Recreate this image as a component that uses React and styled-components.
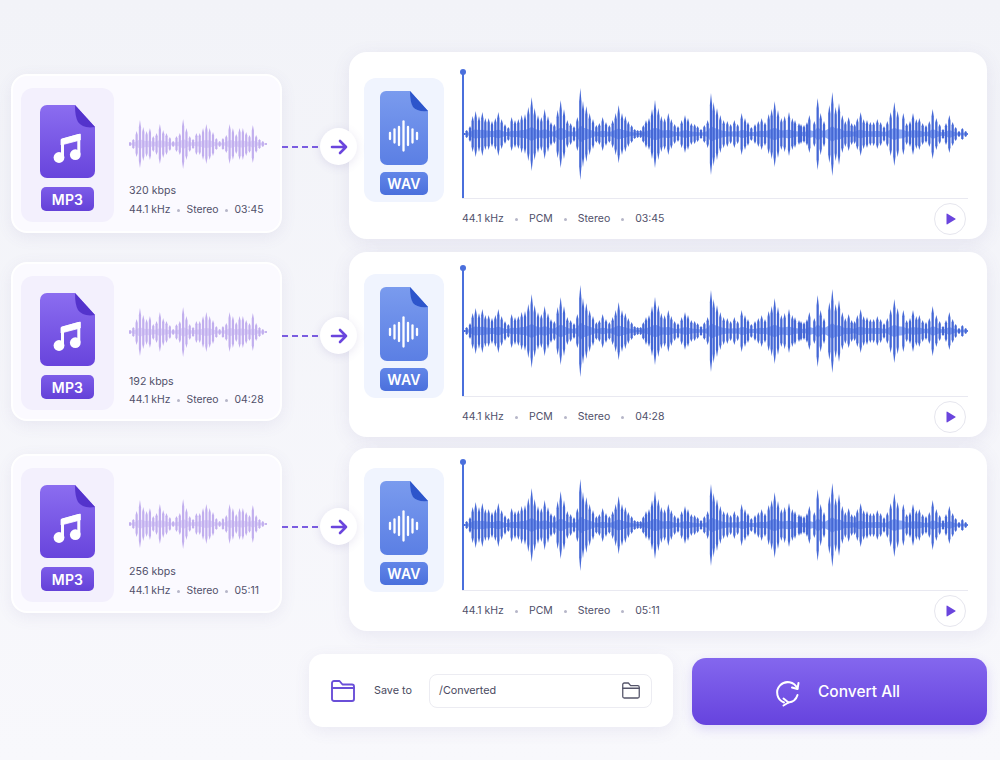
import React from 'react'
import styled, { createGlobalStyle } from 'styled-components'

const GlobalStyle = createGlobalStyle`
  html, body { margin: 0; padding: 0; }
  body {
    width: 1000px;
    height: 760px;
    overflow: hidden;
    font-family: Inter, "Liberation Sans", sans-serif;
    background: linear-gradient(180deg, #f2f3f8 0%, #f8f8fc 100%);
  }
`

// [x, half height] of the bars, measured in three stretches of the reference
const stretch = (start, bars) => bars.map(([x, amp]) => [start + x / 3 - 462, amp])

const LARGE_WAVE = [
  ...stretch(460, [
    [12, 1], [20, 4], [30, 8], [38, 18], [47, 23], [57, 18], [67, 22], [76, 16], [86, 16], [96, 13], [106, 16], [115, 22], [125, 15], [135, 10], [145, 7],
    [155, 17], [165, 14], [175, 15], [185, 19], [195, 20], [205, 27], [215, 37], [224, 26], [234, 19], [244, 17], [254, 25], [264, 18], [273, 12], [283, 10],
    [293, 24], [302, 34], [312, 25], [322, 14], [332, 11], [342, 8], [352, 17], [361, 46], [369, 33], [379, 28], [389, 21], [399, 15], [409, 9], [418, 11],
    [428, 17], [438, 12], [448, 9], [458, 14], [467, 21], [476, 29], [486, 21], [496, 18], [505, 13], [515, 9],
  ]),
  ...stretch(630, [
    [14, 5], [23, 4], [32, 4], [40, 9], [48, 14], [57, 16], [66, 25], [75, 34], [85, 26], [94, 18], [104, 16], [115, 21], [124, 15], [134, 10], [144, 8],
    [155, 14], [165, 19], [174, 16], [184, 11], [194, 10], [203, 8], [213, 5], [223, 9], [233, 14], [243, 41], [251, 32], [261, 26], [271, 19], [281, 14],
    [292, 13], [302, 10], [313, 14], [323, 10], [335, 21], [345, 16], [354, 12], [364, 7], [375, 10], [385, 13], [395, 16], [405, 12], [416, 20], [425, 25],
    [434, 33], [444, 24], [454, 16], [464, 18], [477, 22], [487, 16], [495, 14], [507, 11],
  ]),
  ...stretch(800, [
    [3, 10], [12, 9], [21, 12], [28, 19], [43, 13], [53, 36], [62, 21], [72, 13], [88, 29], [97, 42], [107, 27], [117, 31], [127, 19], [136, 13], [146, 17],
    [155, 11], [164, 10], [172, 16], [182, 22], [191, 15], [201, 14], [211, 12], [221, 12], [232, 15], [242, 12], [252, 8], [262, 13], [272, 22], [283, 32],
    [293, 23], [310, 21], [320, 11], [330, 13], [339, 21], [349, 15], [358, 16], [368, 11], [378, 9], [388, 13], [398, 25], [409, 16], [419, 10], [429, 5],
    [438, 11], [448, 19], [458, 12], [467, 7], [477, 3], [487, 6], [497, 3], [505, 1],
  ]),
]

const SMALL_WAVE = [
  2, 5, 13, 24, 17, 13, 16, 8, 11, 20, 14, 11, 7, 3, 8, 11, 25, 16, 8, 5, 11, 11, 16, 20, 16, 12, 6, 3, 6, 9, 20, 16, 10, 16, 16, 12, 9, 19, 9, 5, 3, 1,
].map((amp, i) => [1 + i * 3.32, amp])

const ROWS = [
  { kbps: '320 kbps', time: '03:45', top: 17, height: 187, offset: 22, gap: 13, arrow: 94, kbpsTop: 10, metaTop: 5 },
  { kbps: '192 kbps', time: '04:28', top: 13, height: 185, offset: 10, gap: 11, arrow: 83, kbpsTop: 13, metaTop: 4 },
  { kbps: '256 kbps', time: '05:11', top: 11, height: 183, offset: 6, gap: 23, arrow: 78, kbpsTop: 11, metaTop: 5 },
]

const Page = styled.div`
  padding: 52px 13px 0 11px;
  display: flex;
  flex-direction: column;
`

const Row = styled.div`
  display: flex;
  align-items: flex-start;
  height: ${(p) => p.$height}px;
  margin-bottom: ${(p) => p.$gap}px;
`

const SourceCard = styled.div`
  box-sizing: border-box;
  width: 271px;
  height: 159px;
  margin-top: ${(p) => p.$offset}px;
  padding: 12px 8px;
  display: flex;
  gap: 15px;
  background: #fbfaff;
  border: 2px solid #fff;
  border-radius: 16px;
  box-shadow: 0 4px 16px rgba(96, 88, 160, 0.09);
`

const SourcePanel = styled.div`
  width: 93px;
  height: 134px;
  flex: none;
  box-sizing: border-box;
  padding-top: 17px;
  border-radius: 12px;
  background: #f3f0fd;
  display: flex;
  flex-direction: column;
  align-items: center;
`

const Badge = styled.div`
  display: flex;
  align-items: center;
  justify-content: center;
  font-weight: 600;
  font-size: 14px;
  letter-spacing: 0.2px;
  color: #fff;
  border-radius: 5px;
  width: ${(p) => (p.$kind === 'wav' ? 48 : 53)}px;
  height: ${(p) => (p.$kind === 'wav' ? 23 : 24)}px;
  margin-top: ${(p) => (p.$kind === 'wav' ? 7 : 9)}px;
  background: ${(p) =>
    p.$kind === 'wav'
      ? 'linear-gradient(180deg, #6286e8, #4b70dc)'
      : 'linear-gradient(180deg, #7c5ce8, #6441d8)'};
`

const SourceInfo = styled.div`
  flex: 1;
  display: flex;
  flex-direction: column;
  font-size: 10.6px;
  color: #50506a;
`

const SmallWaveBox = styled.div`
  height: 60px;
  margin-top: 26px;
  display: flex;
`

const Kbps = styled.div`
  margin-top: ${(p) => p.$top}px;
  line-height: 14px;
`

const MetaLine = styled.div`
  display: flex;
  align-items: center;
  gap: ${(p) => p.$gap}px;
  font-size: ${(p) => p.$size}px;
  line-height: 14px;
  white-space: nowrap;
  color: #50506a;
  margin-top: ${(p) => p.$top || 0}px;
`

const Dot = styled.span`
  width: 3px;
  height: 3px;
  border-radius: 50%;
  background: #b6b6c8;
`

const Connector = styled.div`
  position: relative;
  width: 67px;
  height: 2px;
  flex: none;
  margin-top: ${(p) => p.$top}px;
  background: repeating-linear-gradient(90deg, #7a5ce0 0 6px, transparent 6px 10px);
  z-index: 2;
`

const ArrowDisc = styled.div`
  position: absolute;
  left: 38px;
  top: -18px;
  width: 37px;
  height: 37px;
  border-radius: 50%;
  background: #fff;
  box-shadow: 0 2px 10px rgba(96, 88, 160, 0.14);
  display: flex;
  align-items: center;
  justify-content: center;
`

const ResultCard = styled.div`
  box-sizing: border-box;
  width: 638px;
  height: 100%;
  padding: ${(p) => p.$top}px 19px 0 15px;
  display: flex;
  gap: 18px;
  background: #fff;
  border-radius: 18px;
  box-shadow: 0 4px 18px rgba(96, 88, 160, 0.1);
`

const ResultPanel = styled.div`
  width: 80px;
  height: 124px;
  flex: none;
  margin-top: 9px;
  box-sizing: border-box;
  padding-top: 13px;
  border-radius: 12px;
  background: #f0f4fe;
  display: flex;
  flex-direction: column;
  align-items: center;
`

const ResultBody = styled.div`
  flex: 1;
  display: flex;
  flex-direction: column;
  min-width: 0;
`

const WaveArea = styled.div`
  position: relative;
  flex: 1;
  display: flex;
  align-items: center;
  border-bottom: 1px solid #e9e9f1;
`

const Playhead = styled.div`
  position: absolute;
  left: 0;
  top: 3px;
  bottom: 0;
  width: 2px;
  background: #4a6fdc;

  &::before {
    content: '';
    position: absolute;
    left: -2px;
    top: -3px;
    width: 6px;
    height: 6px;
    border-radius: 50%;
    background: #4a6fdc;
  }
`

const MetaRow = styled.div`
  height: 40px;
  flex: none;
  display: flex;
  align-items: center;
  justify-content: space-between;
`

const PlayButton = styled.div`
  width: 32px;
  height: 32px;
  margin-right: 2px;
  box-sizing: border-box;
  border: 1px solid #e6e6ee;
  border-radius: 50%;
  background: #fff;
  display: flex;
  align-items: center;
  justify-content: center;
`

const Footer = styled.div`
  display: flex;
  align-items: center;
  justify-content: flex-end;
  gap: 19px;
`

const SaveBox = styled.div`
  box-sizing: border-box;
  width: 364px;
  height: 73px;
  padding: 0 21px 0 22px;
  display: flex;
  align-items: center;
  background: #fff;
  border-radius: 14px;
  box-shadow: 0 4px 16px rgba(96, 88, 160, 0.09);
`

const SaveLabel = styled.span`
  width: 38px;
  flex: none;
  white-space: nowrap;
  font-size: 10.8px;
  color: #4a4a60;
  margin: 0 17px 0 19px;
`

const PathField = styled.div`
  flex: 1;
  height: 34px;
  box-sizing: border-box;
  padding: 0 11px 0 9px;
  display: flex;
  align-items: center;
  justify-content: space-between;
  border: 1px solid #ececf2;
  border-radius: 8px;
  font-size: 10.8px;
  color: #4a4a60;
`

const ConvertButton = styled.div`
  box-sizing: border-box;
  width: 295px;
  height: 67px;
  margin-top: 2px;
  padding-right: 6px;
  display: flex;
  align-items: center;
  justify-content: center;
  gap: 17px;
  color: #fff;
  font-size: 15.5px;
  font-weight: 500;
  border-radius: 14px;
  background: linear-gradient(180deg, #8467ee 0%, #6643de 100%);
  box-shadow: 0 4px 12px rgba(100, 70, 220, 0.18);
`

// tapered bars, thick at the axis and thin at the tips, with a soft band along the axis
const Wave = ({ bars, width, height, colors, barWidth }) => {
  const mid = height / 2
  const half = barWidth / 2
  const top = bars.map(([x, a]) => `${x},${mid - a * 0.18 - 0.5}`)
  const bottom = bars.map(([x, a]) => `${x},${mid + a * 0.18 + 0.5}`).reverse()
  return (
    <svg width={width} height={height} viewBox={`0 0 ${width} ${height}`}>
      <polygon points={[...top, ...bottom].join(' ')} fill={colors[1]} opacity="0.8" />
      {bars.map(([x, a]) => (
        <path
          key={x}
          d={`M${x} ${mid - a}L${x + half} ${mid - a * 0.7}V${mid + a * 0.7}L${x} ${mid + a}L${x - half} ${mid + a * 0.7}V${mid - a * 0.7}Z`}
          fill={colors[0]}
        />
      ))}
    </svg>
  )
}

const Mp3Icon = ({ id }) => (
  <svg width="55" height="73" viewBox="0 0 55 73">
    <defs>
      <linearGradient id={id} x1="0" y1="0" x2="0" y2="1">
        <stop offset="0" stopColor="#8b6df0" />
        <stop offset="1" stopColor="#6844dc" />
      </linearGradient>
    </defs>
    <path d="M7 0H35L55 22V66a7 7 0 0 1-7 7H7a7 7 0 0 1-7-7V7a7 7 0 0 1 7-7Z" fill={`url(#${id})`} />
    <path d="M35 0L55 22Q43 24 38 17Q35 12 35 0Z" fill="#5433cc" />
    <path d="M22.5 52V35L38.8 30.5V49" fill="none" stroke="#fff" strokeWidth="3" strokeLinejoin="round" />
    <path d="M21 34.5L40.3 29V35L21 40Z" fill="#fff" stroke="#fff" strokeWidth="0.8" strokeLinejoin="round" />
    <circle cx="19" cy="52.5" r="5.4" fill="#fff" />
    <circle cx="35.3" cy="49.7" r="5.4" fill="#fff" />
  </svg>
)

const WavIcon = ({ id }) => (
  <svg width="48" height="74" viewBox="0 0 48 74">
    <defs>
      <linearGradient id={id} x1="0" y1="0" x2="0" y2="1">
        <stop offset="0" stopColor="#7a9bee" />
        <stop offset="1" stopColor="#5b7fe4" />
      </linearGradient>
    </defs>
    <path d="M6 0H30L48 20V67a7 7 0 0 1-7 7H7a7 7 0 0 1-7-7V6a6 6 0 0 1 6-6Z" fill={`url(#${id})`} />
    <path d="M30 0L48 20Q37 21 33 16Q30 11 30 0Z" fill="#2d55cb" />
    {[[10, 3], [14.5, 6.5], [19, 9], [23.5, 14.5], [28, 9], [32.5, 6.5], [37, 3]].map(([x, h]) => (
      <line key={x} x1={x} x2={x} y1={45 - h} y2={45 + h} stroke="#fff" strokeWidth="2.3" strokeLinecap="round" />
    ))}
  </svg>
)

const ArrowIcon = () => (
  <svg width="18" height="18" viewBox="0 0 18 18" fill="none" stroke="#6a45dd" strokeWidth="2.6" strokeLinecap="round" strokeLinejoin="round">
    <path d="M2 9H16M10 3L16 9L10 15" />
  </svg>
)

const PlayIcon = () => (
  <svg width="11" height="12" viewBox="0 0 11 12">
    <path d="M1.5 1.2a.6.6 0 0 1 .9-.5L10.2 5.4a.7.7 0 0 1 0 1.2L2.4 11.3a.6.6 0 0 1-.9-.5Z" fill="#6a45dd" />
  </svg>
)

const FolderIcon = ({ color, width, height, stroke }) => (
  <svg width={width} height={height} viewBox="0 0 24 22" fill="none" stroke={color} strokeWidth={stroke} strokeLinejoin="round" strokeLinecap="round">
    <path d="M1 3a2 2 0 0 1 2-2h5.5l3 3.5H21a2 2 0 0 1 2 2V19a2 2 0 0 1-2 2H3a2 2 0 0 1-2-2Z" />
    <path d="M1 8H23" />
  </svg>
)

const RefreshIcon = () => (
  <svg width="28" height="30" viewBox="0 0 28 30" fill="none" stroke="#fff" strokeWidth="2" strokeLinecap="round" strokeLinejoin="round">
    <path d="M11 25.5A10.5 10.5 0 1 1 24.3 11.5" />
    <path d="M25.5 6L24.5 12L19 10.5" />
    <path d="M24.5 18A10.5 10.5 0 0 1 15.5 25.5" />
    <path d="M10.5 21.5L15.5 25.5L10.5 28.5" />
  </svg>
)

const AudioRow = ({ row, index }) => (
  <Row $height={row.height} $gap={row.gap}>
    <SourceCard $offset={row.offset}>
      <SourcePanel>
        <Mp3Icon id={`mp3-${index}`} />
        <Badge $kind="mp3">MP3</Badge>
      </SourcePanel>
      <SourceInfo>
        <SmallWaveBox>
          <Wave bars={SMALL_WAVE} width={138} height={60} colors={['#c1aeee', '#d6caf6']} barWidth={2.2} />
        </SmallWaveBox>
        <Kbps $top={row.kbpsTop}>{row.kbps}</Kbps>
        <MetaLine $gap={6.5} $size={10.4} $top={row.metaTop}>
          <span>44.1 kHz</span>
          <Dot />
          <span>Stereo</span>
          <Dot />
          <span>{row.time}</span>
        </MetaLine>
      </SourceInfo>
    </SourceCard>
    <Connector $top={row.arrow}>
      <ArrowDisc>
        <ArrowIcon />
      </ArrowDisc>
    </Connector>
    <ResultCard $top={row.top}>
      <ResultPanel>
        <WavIcon id={`wav-${index}`} />
        <Badge $kind="wav">WAV</Badge>
      </ResultPanel>
      <ResultBody>
        <WaveArea>
          <Wave bars={LARGE_WAVE} width={506} height={110} colors={['#4467d6', '#7396f2']} barWidth={2.3} />
          <Playhead />
        </WaveArea>
        <MetaRow>
          <MetaLine $gap={11} $size={10.5}>
            <span>44.1 kHz</span>
            <Dot />
            <span>PCM</span>
            <Dot />
            <span>Stereo</span>
            <Dot />
            <span>{row.time}</span>
          </MetaLine>
          <PlayButton>
            <PlayIcon />
          </PlayButton>
        </MetaRow>
      </ResultBody>
    </ResultCard>
  </Row>
)

export default function App() {
  return (
    <>
      <GlobalStyle />
      <Page>
        {ROWS.map((row, i) => (
          <AudioRow key={row.time} row={row} index={i} />
        ))}
        <Footer>
          <SaveBox>
            <FolderIcon color="#6a4fd8" width={24} height={22} stroke={1.9} />
            <SaveLabel>Save to</SaveLabel>
            <PathField>
              <span>/Converted</span>
              <FolderIcon color="#55556a" width={18} height={17} stroke={1.7} />
            </PathField>
          </SaveBox>
          <ConvertButton>
            <RefreshIcon />
            Convert All
          </ConvertButton>
        </Footer>
      </Page>
    </>
  )
}
